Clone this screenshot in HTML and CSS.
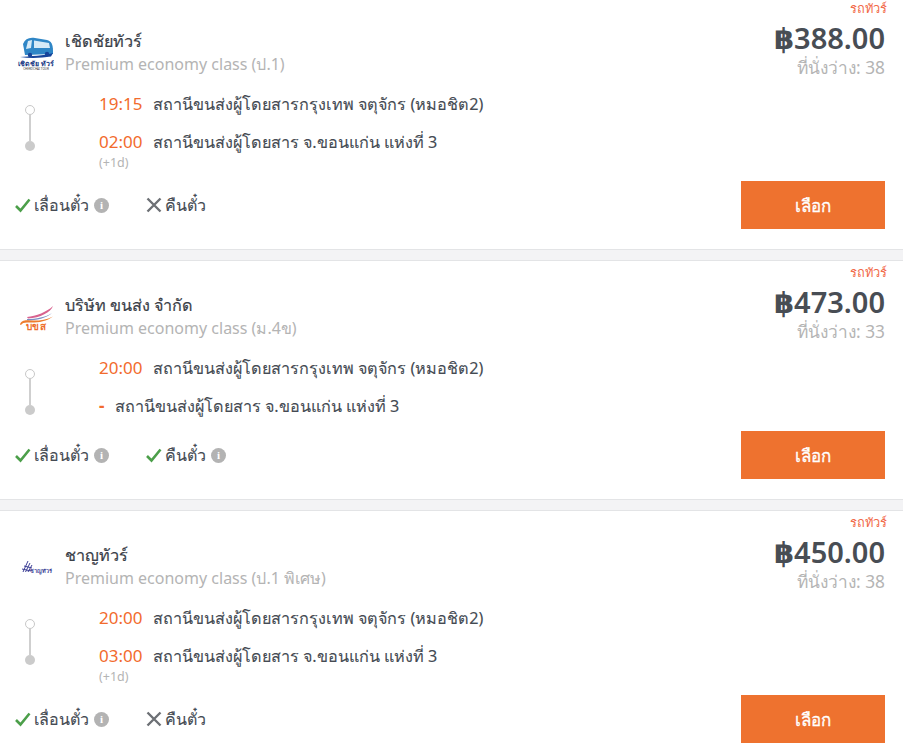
FILE: index.html
```html
<!DOCTYPE html>
<html lang="th">
<head>
<meta charset="utf-8">
<title>รถทัวร์</title>
<link rel="stylesheet" href="styles.css">
</head>
<body>
<main class="list">

<article class="card">
  <div class="main">
    <div class="op">
      <div class="logo">
        <svg width="38" height="42" viewBox="0 0 38 42"><path d="M7 13 C9 8 13 6 19 7 L31 9 C35 10 37 13 37 20 L37 23 L9 24 Z" fill="#2f86c6"/><path d="M12 10 L16 9 L15 17 L10 18 Z M18 9.500 L33 12 L34 17 L18 17 Z" fill="#d6eaf7"/><path d="M4 26 C14 25 28 25 37 22 L35 25.500 C26 27 14 27.500 4 26 Z" fill="#17449a"/><circle cx="14" cy="24" r="2.200" fill="#17449a"/><circle cx="31" cy="23" r="2.200" fill="#17449a"/><text x="20" y="35" class="logo-a">เชิดชัย ทัวร์</text><text x="20" y="39" class="logo-b">CHERDCHAI TOUR</text></svg>
      </div>
      <div>
        <div class="name">เชิดชัยทัวร์</div>
        <div class="cls">Premium economy class (ป.1)</div>
      </div>
    </div>
    <div class="route">
      <div class="track"><i class="dot-a"></i><i class="line"></i><i class="dot-b"></i></div>
      <div class="stops">
        <div class="stop"><span class="time">19:15</span><span>สถานีขนส่งผู้โดยสารกรุงเทพ จตุจักร (หมอชิต2)</span></div>
        <div class="stop"><span class="time">02:00</span><span>สถานีขนส่งผู้โดยสาร จ.ขอนแก่น แห่งที่ 3</span></div>
        <div class="plus">(+1d)</div>
      </div>
    </div>
  </div>
  <div class="side">
    <div class="badge">รถทัวร์</div>
    <div class="price">฿388.00</div>
    <div class="seats">ที่นั่งว่าง: 38</div>
  </div>
  <div class="foot">
    <div class="feats">
      <div class="feat"><svg class="mk" viewBox="0 0 16 16"><path d="M1 9 L5.500 13.500 L14.500 2.500" class="ok"/></svg><span>เลื่อนตั๋ว</span><i class="info">i</i></div>
      <div class="feat"><svg class="mk" viewBox="0 0 16 16"><path d="M1.500 1.500 L14.500 14.500 M14.500 1.500 L1.500 14.500" class="no"/></svg><span>คืนตั๋ว</span></div>
    </div>
    <button class="pick">เลือก</button>
  </div>
</article>

<article class="card">
  <div class="main">
    <div class="op">
      <div class="logo">
        <svg width="38" height="42" viewBox="0 0 38 42"><path d="M11 22 C20 21 31 17 37 11 C35 17 24 23 12 23.500 Z" fill="#d8628f"/><path d="M11 24 C20 24 30 22 36 18 C31 23 20 25.500 11 25.500 Z" fill="#7c8fc4"/><path d="M4 29.500 C5 25.500 9 25 14 25.500 C22 26 30 25 37 21.500 C30 27 20 28 12 27.500 C9 27.300 6 28 5 30 Z" fill="#ee7d2d"/><text x="20" y="34.500" class="logo-c">บขส</text></svg>
      </div>
      <div>
        <div class="name">บริษัท ขนส่ง จำกัด</div>
        <div class="cls">Premium economy class (ม.4ข)</div>
      </div>
    </div>
    <div class="route">
      <div class="track"><i class="dot-a"></i><i class="line"></i><i class="dot-b"></i></div>
      <div class="stops">
        <div class="stop"><span class="time">20:00</span><span>สถานีขนส่งผู้โดยสารกรุงเทพ จตุจักร (หมอชิต2)</span></div>
        <div class="stop"><span class="time dash">-</span><span>สถานีขนส่งผู้โดยสาร จ.ขอนแก่น แห่งที่ 3</span></div>
      </div>
    </div>
  </div>
  <div class="side">
    <div class="badge">รถทัวร์</div>
    <div class="price">฿473.00</div>
    <div class="seats">ที่นั่งว่าง: 33</div>
  </div>
  <div class="foot">
    <div class="feats">
      <div class="feat"><svg class="mk" viewBox="0 0 16 16"><path d="M1 9 L5.500 13.500 L14.500 2.500" class="ok"/></svg><span>เลื่อนตั๋ว</span><i class="info">i</i></div>
      <div class="feat"><svg class="mk" viewBox="0 0 16 16"><path d="M1 9 L5.500 13.500 L14.500 2.500" class="ok"/></svg><span>คืนตั๋ว</span><i class="info">i</i></div>
    </div>
    <button class="pick">เลือก</button>
  </div>
</article>

<article class="card">
  <div class="main">
    <div class="op">
      <div class="logo">
        <svg width="38" height="42" viewBox="0 0 38 42"><path d="M7 27 L12 16 M9.500 27 L14 18 M12 27 L16 20 M6 24 L15 26 M8 21 L16 23" stroke="#3d3f96" stroke-width="1" fill="none"/><text x="25" y="28" class="logo-d">ชาญทัวร์</text></svg>
      </div>
      <div>
        <div class="name">ชาญทัวร์</div>
        <div class="cls">Premium economy class (ป.1 พิเศษ)</div>
      </div>
    </div>
    <div class="route">
      <div class="track"><i class="dot-a"></i><i class="line"></i><i class="dot-b"></i></div>
      <div class="stops">
        <div class="stop"><span class="time">20:00</span><span>สถานีขนส่งผู้โดยสารกรุงเทพ จตุจักร (หมอชิต2)</span></div>
        <div class="stop"><span class="time">03:00</span><span>สถานีขนส่งผู้โดยสาร จ.ขอนแก่น แห่งที่ 3</span></div>
        <div class="plus">(+1d)</div>
      </div>
    </div>
  </div>
  <div class="side">
    <div class="badge">รถทัวร์</div>
    <div class="price">฿450.00</div>
    <div class="seats">ที่นั่งว่าง: 38</div>
  </div>
  <div class="foot">
    <div class="feats">
      <div class="feat"><svg class="mk" viewBox="0 0 16 16"><path d="M1 9 L5.500 13.500 L14.500 2.500" class="ok"/></svg><span>เลื่อนตั๋ว</span><i class="info">i</i></div>
      <div class="feat"><svg class="mk" viewBox="0 0 16 16"><path d="M1.500 1.500 L14.500 14.500 M14.500 1.500 L1.500 14.500" class="no"/></svg><span>คืนตั๋ว</span></div>
    </div>
    <button class="pick">เลือก</button>
  </div>
</article>

</main>
</body>
</html>
```
FILE: styles.css
```css
* { box-sizing: border-box; }
html, body { margin: 0; height: 755px; overflow: hidden; background: #fff; }
body { font-family: "Noto Sans", "Open Sans", "DejaVu Sans", sans-serif; color: #454b53; }
.list { margin-top: -3px; background: #f3f3f5; }
.card {
  display: grid;
  grid-template-columns: 1fr auto;
  background: #fff;
  padding: 3px 18px 20px 15px;
  border-bottom: 1px solid #e3e4e6;
}
.card + .card { margin-top: 10px; border-top: 1px solid #e3e4e6; }
.main { grid-column: 1; grid-row: 1; }
.side { grid-column: 2; grid-row: 1; text-align: right; }
.foot { grid-column: 1 / 3; grid-row: 2; display: flex; align-items: center; justify-content: space-between; margin-top: 13px; }
.op { display: flex; align-items: center; padding-top: 29px; }
.logo { width: 50px; height: 46px; flex: none; display: flex; justify-content: center; align-items: center; padding-right: 10px; }
.name { font-size: 16.200px; line-height: 24px; color: #3a4048; -webkit-text-stroke: .2px #3a4048; }
.cls { font-size: 16px; line-height: 22px; color: #b4b4b4; }
.route { display: flex; margin-top: 17px; }
.track { width: 84px; padding: 13px 0 0 10px; display: flex; flex-direction: column; align-items: flex-start; flex: none; }
.dot-a { width: 10px; height: 10px; border: 1px solid #c8c8c8; border-radius: 50%; }
.line { width: 2px; height: 26px; background: #cfcfcf; margin-left: 4px; }
.dot-b { width: 10px; height: 10px; background: #cbcbcb; border-radius: 50%; }
.stops { min-width: 0; }
.stop { display: flex; font-size: 16.200px; line-height: 24px; height: 38px; align-items: flex-start; color: #454b53; -webkit-text-stroke: .1px #454b53; }
.stop + .stop { height: 24px; }
.time { color: #f26b2d; width: 54px; flex: none; font-size: 17px; -webkit-text-stroke: 0; }
.dash { width: 16px; font-weight: 700; }
.plus { font-size: 12.500px; color: #b4b4b4; line-height: 18px; height: 14px; }
.badge { font-size: 12.800px; line-height: 16px; color: #f26b4a; margin-right: -2px; }
.price { font-size: 29px; line-height: 40px; margin-top: 2px; color: #484d54; font-weight: 600; }
.seats { font-size: 17.300px; line-height: 20px; color: #b4b4b4; }
.feats { display: flex; }
.feat { display: flex; align-items: center; font-size: 16px; width: 131px; color: #454b53; -webkit-text-stroke: .1px #454b53; }
.mk { width: 16px; height: 16px; margin-right: 3px; fill: none; }
.ok { stroke: #4c9f4a; stroke-width: 2.600; fill: none; }
.no { stroke: #6d7075; stroke-width: 2.400; fill: none; }
.info { width: 15px; height: 15px; margin-left: 5px; border-radius: 50%; background: #b3b3b3; color: #fff; font: 700 11px/15px "Liberation Serif", serif; text-align: center; -webkit-text-stroke: 0; }
.pick { width: 144px; height: 48px; background: #ee722f; border: 0; color: #fff; font: 500 17px "Noto Sans", "DejaVu Sans", sans-serif; -webkit-text-stroke: .3px #fff; }
.logo-a { font: 700 7px "Noto Sans", sans-serif; fill: #1b3c86; text-anchor: middle; }
.logo-b { font: 3px "Noto Sans", sans-serif; fill: #333; text-anchor: middle; }
.logo-c { font: 700 10px "Noto Sans", sans-serif; fill: #ee6f2d; text-anchor: middle; letter-spacing: .5px; }
.logo-d { font: 700 5.500px "Liberation Serif", "Noto Sans", serif; fill: #3d3f96; text-anchor: middle; }
```
